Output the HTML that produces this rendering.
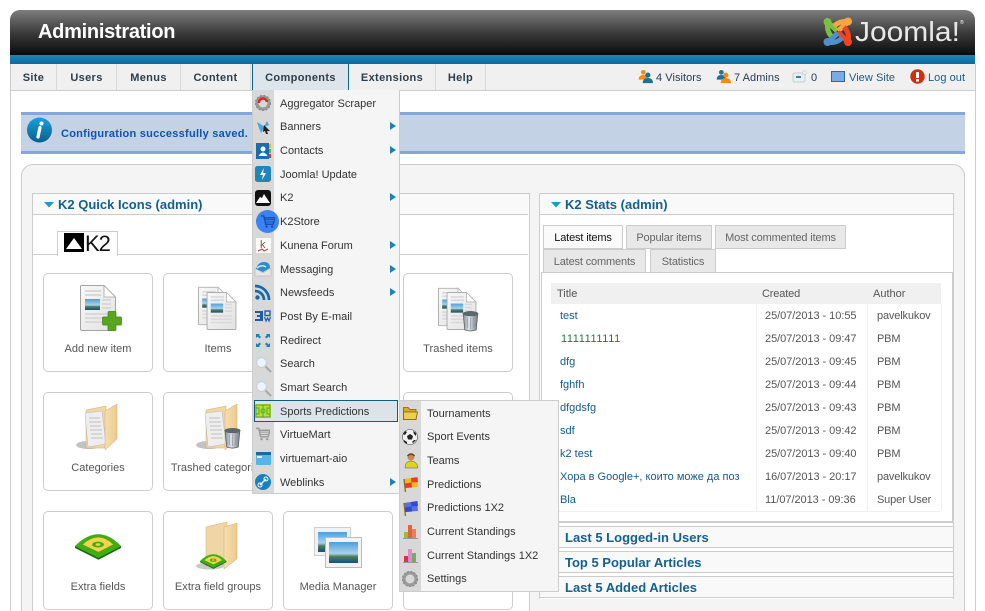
<!DOCTYPE html>
<html><head><meta charset="utf-8"><title>Administration</title>
<style>
html,body{margin:0;padding:0;background:#fff;width:985px;height:611px;overflow:hidden;font-family:"Liberation Sans",Arial,sans-serif;font-size:11px;color:#444}
#wrap{position:relative;width:985px;height:611px;overflow:hidden}
.a,.t,.m,.tab,.box,.row,.lbl{position:absolute}
.t{white-space:nowrap;line-height:14px;margin-top:1px}
svg{position:absolute;overflow:visible}
#head{left:10px;top:10px;width:965px;height:45px;border-radius:10px 10px 0 0;background:linear-gradient(#7d7d7d,#3c3c3c 50%,#0b0b0b)}
#strip{left:10px;top:55px;width:965px;height:9px;background:linear-gradient(#1c85b8,#0a6b9e)}
#nav{left:11px;top:64px;width:964px;height:26px;background:#f0f0f0;border-bottom:1px solid #ccc}
.m{top:64px;height:26px;line-height:28px;text-align:center;font-weight:bold;color:#2e3d4a;border-right:1px solid #d8d8d8;letter-spacing:.35px}
.nt{top:70px;color:#2a3a55;letter-spacing:.05px}
.box{width:108px;height:97px;border:1px solid #ccc;border-radius:5px;background:#fff}
.lbl{width:110px;text-align:center;line-height:14px;color:#555;white-space:nowrap;margin-top:1px;letter-spacing:.03px}
.tab{box-sizing:border-box;height:24px;line-height:24px;text-align:center;background:#e8e8e8;border:1px solid #ccc;color:#666;letter-spacing:-.15px}
.row{left:551px;width:390px;height:23px;border-bottom:1px solid #f0f0f0;background:#fff}
.c{position:absolute;top:0;margin-top:1px;line-height:22px;white-space:nowrap;color:#555}
.d{letter-spacing:-.05px}
.u{letter-spacing:-.15px}
.l{color:#145a88}
.acc{position:absolute;left:539px;width:413px;height:20px;border:1px solid #ccc;background:#f9f9f9}
.acc span{position:absolute;left:25px;top:2px;font:bold 13px/18px "Liberation Sans",sans-serif;color:#14608f;white-space:nowrap}
.mi{position:absolute;left:280px;color:#333;line-height:14px;white-space:nowrap;margin-top:1px}
.si{position:absolute;left:427px;color:#333;line-height:14px;white-space:nowrap;margin-top:1px}
.arr{position:absolute;left:390px;width:0;height:0;border-left:6px solid #1c84b5;border-top:4.5px solid transparent;border-bottom:4.5px solid transparent}
</style></head><body><div id="wrap">
<svg width="0" height="0" style="position:absolute"><defs>
<linearGradient id="pg" x1="0" y1="0" x2="1" y2="1"><stop offset="0" stop-color="#f8f8f8"/><stop offset="1" stop-color="#e2e2e2"/></linearGradient>
<linearGradient id="sky" x1="0" y1="0" x2="0" y2="1"><stop offset="0" stop-color="#4d9fdc"/><stop offset=".55" stop-color="#a9d3ea"/><stop offset=".7" stop-color="#4f7a5a"/><stop offset="1" stop-color="#14507f"/></linearGradient>
<linearGradient id="fold" x1="0" y1="0" x2="1" y2="0"><stop offset="0" stop-color="#f6deb0"/><stop offset="1" stop-color="#ecca8e"/></linearGradient>
<linearGradient id="can" x1="0" y1="0" x2="1" y2="0"><stop offset="0" stop-color="#7f8c96"/><stop offset=".4" stop-color="#dfe5ea"/><stop offset="1" stop-color="#6d7880"/></linearGradient>
<symbol id="page" viewBox="0 0 36 46" overflow="visible"><path d="M1 .5H24L35.500 12V44a1.500 1.500 0 0 1-1.500 1.500H2A1.500 1.500 0 0 1 .5 44V2A1.500 1.500 0 0 1 1 .5Z" fill="url(#pg)" stroke="#a4a4a4"/><path d="M24 .5V12H35.500Z" fill="#fff" stroke="#b4b4b4"/><rect x="5" y="14" width="15" height="11" fill="url(#sky)"/><path d="M5 6h16M5 10h16M22 15h9M22 19h9M22 23h9M5 29h26M5 33h26M5 37h26" stroke="#d9d9d9" stroke-width="2"/></symbol>
<symbol id="trash" viewBox="0 0 16 20" overflow="visible"><path d="M1 3.500 2.500 19Q8 21 13.500 19L15 3.500Z" fill="url(#can)" stroke="#555" stroke-width=".6"/><ellipse cx="8" cy="3.500" rx="7.500" ry="2.500" fill="#5c666d"/><path d="M5 7v10M8 7v11M11 7v10" stroke="#909aa2" stroke-width=".7"/></symbol>
<symbol id="folderbig" viewBox="0 0 42 47" overflow="visible"><ellipse cx="13" cy="41" rx="13" ry="4" fill="#777" opacity=".45"/><path d="M10 6 30 2V44L10 44Z" fill="#f0d6a4" stroke="#d2ae72" stroke-width=".5"/><path d="M9 9 26 7 30 40 12 43Z" fill="#eeeeee" stroke="#b8b8b8" stroke-width=".5"/><path d="M13 14h11M13 18h12M14 22h11M14 26h12M15 30h11M15 34h12" stroke="#cfcfcf" stroke-width="1.500"/><path d="M29 7 41 0V35L29 46Z" fill="url(#fold)" stroke="#d2ae72" stroke-width=".5"/></symbol>
<symbol id="field" viewBox="0 0 48 24" overflow="visible"><path d="M0 12Q24-12 47 12L24 24Z" fill="#3eae12"/><path d="M0 12 24 24 47 12V14L24 26 0 14Z" fill="#176a0b"/><path d="M8 10.500Q24-4 39 10.500L24 18Z" fill="#fbd04f"/><ellipse cx="23.500" cy="10.500" rx="6" ry="3" fill="#3eae12"/><ellipse cx="23.500" cy="10.500" rx="2.500" ry="1.300" fill="#fbd04f"/></symbol>
<symbol id="mag" viewBox="0 0 17 17"><circle cx="6.500" cy="6.500" r="5" fill="#eaf5fb" stroke="#c8d0d5" stroke-width="1.300"/><path d="M10.500 10.500 16 16" stroke="#a8a8a8" stroke-width="2"/></symbol>
<symbol id="gear" viewBox="0 0 16 16"><circle cx="8" cy="8" r="6" fill="none" stroke="#9a9a9a" stroke-width="3"/><circle cx="8" cy="8" r="7.400" fill="none" stroke="#8a8a8a" stroke-width="1.400" stroke-dasharray="2 1.500"/></symbol>
<symbol id="flag" viewBox="0 0 16 17"><path d="M2 3 15 1 16 11 3 12Z" fill="currentColor"/><path d="M2 3 3.500 16" stroke="#8a6a2a" stroke-width="1.300"/></symbol>
<symbol id="usr" viewBox="0 0 15 16"><circle cx="8" cy="4" r="3.500" fill="currentColor"/><path d="M1 15Q1 8 8 8T15 15Z" fill="currentColor"/></symbol>
<symbol id="cart" viewBox="0 0 16 14"><path d="M1 1H4L6 10H14L16 3H5" fill="none" stroke="currentColor" stroke-width="1.500"/><path d="M5 5H15M5.500 7.500H14" stroke="currentColor"/><circle cx="7" cy="12.500" r="1.300" fill="currentColor"/><circle cx="13" cy="12.500" r="1.300" fill="currentColor"/></symbol>
</defs></svg>

<div class="a" id="head"></div>
<div class="t" style="left:38px;top:18px;font:bold 20px/26px 'Liberation Sans',sans-serif;color:#fff;letter-spacing:-.28px">Administration</div>
<svg style="left:823px;top:17px" width="30" height="30" viewBox="0 0 30 30" fill="none" stroke-width="5">
<path d="M5 5Q3 14 9 20" stroke="#7ac143"/><path d="M6 6 14 14" stroke="#7ac143"/>
<path d="M25 5Q18 3 11 9" stroke="#f9a541"/><path d="M25 5 15 14" stroke="#f9a541"/>
<path d="M25 25Q27 16 21 10" stroke="#f44321"/><path d="M25 25 15 15" stroke="#f44321"/>
<path d="M5 25Q13 27 19 21" stroke="#5091cd"/><path d="M5 25 15 16" stroke="#5091cd"/>
<circle cx="4.500" cy="5" r="4" fill="#7ac143"/><circle cx="25" cy="4.500" r="4" fill="#f9a541"/><circle cx="4.500" cy="25" r="4" fill="#5091cd"/><circle cx="25" cy="25" r="4" fill="#f44321"/></svg>
<div class="t" style="left:855px;top:13px;font:28px/36px 'Liberation Sans',sans-serif;color:#e8e8e8;transform:scaleX(1.07);transform-origin:0 0">Joomla!</div>
<div class="t" style="left:960px;top:19px;font:5px/6px 'Liberation Sans',sans-serif;color:#fff">®</div>
<div class="a" id="strip"></div>
<div class="a" id="nav"></div>
<div class="m" style="left:11px;width:45px">Site</div>
<div class="m" style="left:57px;width:59px">Users</div>
<div class="m" style="left:117px;width:63px">Menus</div>
<div class="m" style="left:181px;width:69px">Content</div>
<div class="m" style="left:252px;width:95px;background:#dde5ea;border-left:1px solid #0f6392;border-right:1px solid #0f6392">Components</div>
<div class="m" style="left:349px;width:86px">Extensions</div>
<div class="m" style="left:436px;width:49px">Help</div>

<svg style="left:638px;top:68px" width="15" height="16"><use href="#usr" width="10" height="12" x="0" y="1" color="#f28d14"/><use href="#usr" width="11" height="14" x="4" y="3" color="#1d7096"/></svg>
<svg style="left:716px;top:68px" width="15" height="16"><use href="#usr" width="10" height="12" x="0" y="1" color="#1d7096"/><use href="#usr" width="11" height="14" x="4" y="3" color="#f28d14"/></svg>
<div class="t nt" style="left:656px">4 Visitors</div>
<div class="t nt" style="left:734px">7 Admins</div>
<svg style="left:793px;top:70px" width="14" height="14"><rect x="0" y="3" width="12" height="9" rx="1.500" fill="#e9eef0" stroke="#c8cdd0"/><path d="M3 7h5" stroke="#3a7fa5" stroke-width="2"/><rect x="10" y="1" width="3" height="3" fill="#fff" stroke="#a9c4d2" stroke-width=".6"/></svg>
<div class="t nt" style="left:811px">0</div>
<svg style="left:831px;top:71px" width="15" height="12"><rect x=".5" y=".5" width="13" height="10" fill="#77ace6" stroke="#2a68a5"/></svg>
<div class="t nt" style="left:849px;color:#1c5a87">View Site</div>
<svg style="left:910px;top:69px" width="15" height="15"><circle cx="7.500" cy="7.500" r="7.200" fill="#d0300c"/><rect x="6" y="3" width="3" height="6" rx=".5" fill="#fff"/><rect x="6" y="10" width="3" height="2.500" fill="#fff"/></svg>
<div class="t nt" style="left:928px;color:#1c5a87">Log out</div>

<div class="a" style="left:10px;top:64px;width:1px;height:547px;background:#ccc"></div>
<div class="a" style="left:975px;top:64px;width:1px;height:547px;background:#ccc"></div>

<div class="a" style="left:21px;top:112px;width:944px;height:36px;background:#c3d2e5;border-top:3px solid #86a7dc;border-bottom:3px solid #86a7dc"></div>
<svg style="left:27px;top:117px" width="26" height="26"><defs><linearGradient id="ib" x1="0" y1="0" x2="0" y2="1"><stop offset="0" stop-color="#17a0dc"/><stop offset="1" stop-color="#0b5f8c"/></linearGradient></defs><circle cx="12.500" cy="13" r="12.500" fill="url(#ib)"/><path d="M13 10.500 11 20" stroke="#fff" stroke-width="3.200" stroke-linecap="round"/><circle cx="14.500" cy="6.500" r="2" fill="#fff"/></svg>
<div class="t" style="left:61px;top:126px;font-weight:bold;color:#0b55b5;letter-spacing:.26px">Configuration successfully saved.</div>

<div class="a" style="left:21px;top:164px;width:942px;height:460px;background:#f4f4f4;border:1px solid #ccc;border-radius:12px"></div>

<div class="a" style="left:32px;top:193px;width:496px;height:440px;background:#fff;border:1px solid #ccc"></div>
<div class="a" style="left:33px;top:194px;width:495px;height:20px;background:#f9f9f9;border-bottom:1px solid #ccc"></div>
<svg style="left:44px;top:202px" width="10" height="6"><path d="M0 0H10L5 5.500Z" fill="#1c9ac8"/></svg>
<div class="t" style="left:58px;top:195px;font:bold 13px/18px 'Liberation Sans',sans-serif;color:#14608f">K2 Quick Icons (admin)</div>
<div class="a" style="left:33px;top:254px;width:495px;height:1px;background:#ccc"></div>
<div class="a" style="left:57px;top:231px;width:59px;height:24px;background:#fff;border:1px solid #ccc;border-bottom:0"></div>
<svg style="left:64px;top:233px" width="20" height="19"><rect width="20" height="19" fill="#000"/><path d="M2 16 10 5 18 16Z" fill="#fff"/></svg>
<div class="t" style="left:85px;top:231px;font:22px/24px 'Liberation Sans',sans-serif;color:#111;letter-spacing:-1px">K2</div>

<div class="box" style="left:43px;top:273px"></div><div class="box" style="left:163px;top:273px"></div><div class="box" style="left:283px;top:273px"></div><div class="box" style="left:403px;top:273px"></div>
<div class="box" style="left:43px;top:392px"></div><div class="box" style="left:163px;top:392px"></div><div class="box" style="left:283px;top:392px"></div><div class="box" style="left:403px;top:392px"></div>
<div class="box" style="left:43px;top:511px"></div><div class="box" style="left:163px;top:511px"></div><div class="box" style="left:283px;top:511px"></div><div class="box" style="left:403px;top:511px"></div>

<svg style="left:80px;top:285px" width="36" height="46"><use href="#page" width="36" height="46"/></svg>
<svg style="left:102px;top:311px" width="20" height="20"><path d="M7 .5h6a1 1 0 0 1 1 1V6h4.500a1 1 0 0 1 1 1v6a1 1 0 0 1-1 1H14v4.500a1 1 0 0 1-1 1H7a1 1 0 0 1-1-1V14H1.500a1 1 0 0 1-1-1V7a1 1 0 0 1 1-1H6V1.500a1 1 0 0 1 1-1Z" fill="#58a51f" stroke="#3e8413" stroke-width=".7"/></svg>
<div class="lbl" style="left:43px;top:341px">Add new item</div>

<svg style="left:198px;top:286px" width="30" height="40"><use href="#page" width="30" height="40"/></svg>
<svg style="left:206px;top:292px" width="31" height="38"><use href="#page" width="31" height="38"/></svg>
<div class="lbl" style="left:163px;top:341px">Items</div>

<svg style="left:438px;top:287px" width="30" height="40"><use href="#page" width="30" height="40"/></svg>
<svg style="left:446px;top:292px" width="31" height="38"><use href="#page" width="31" height="38"/></svg>
<svg style="left:462px;top:310px" width="17" height="21"><use href="#trash" width="17" height="21"/></svg>
<div class="lbl" style="left:403px;top:341px">Trashed items</div>

<svg style="left:76px;top:404px" width="42" height="47"><use href="#folderbig" width="42" height="47"/></svg>
<div class="lbl" style="left:43px;top:460px">Categories</div>
<svg style="left:196px;top:404px" width="42" height="47"><use href="#folderbig" width="42" height="47"/></svg>
<svg style="left:224px;top:426px" width="17" height="23"><use href="#trash" width="17" height="23"/></svg>
<div class="lbl" style="left:163px;top:460px">Trashed categories</div>

<svg style="left:75px;top:534px" width="47" height="24"><use href="#field" width="47" height="24"/></svg>
<div class="lbl" style="left:43px;top:579px">Extra fields</div>
<svg style="left:196px;top:522px" width="42" height="48"><path d="M10 5 31 0V42L10 44Z" fill="#f0d6a4" stroke="#d2ae72" stroke-width=".5"/><path d="M28 5 41 1V37L28 47Z" fill="url(#fold)" stroke="#d2ae72" stroke-width=".5"/><ellipse cx="14" cy="44" rx="14" ry="3.500" fill="#777" opacity=".4"/><use href="#field" x="4" y="32" width="27" height="14"/></svg>
<div class="lbl" style="left:163px;top:579px">Extra field groups</div>
<svg style="left:314px;top:527px" width="48" height="41"><rect x=".5" y=".5" width="36" height="28" fill="#f2f2f2" stroke="#cfcfcf"/><rect x="4" y="5" width="29" height="20" fill="url(#sky)"/><rect x="11.500" y="10.500" width="36" height="30" fill="#f2f2f2" stroke="#bdbdbd"/><rect x="15" y="15" width="29" height="21" fill="url(#sky)"/></svg>
<div class="lbl" style="left:283px;top:579px">Media Manager</div>

<div class="a" style="left:539px;top:193px;width:413px;height:405px;background:#fff;border:1px solid #ccc"></div>
<div class="a" style="left:540px;top:194px;width:413px;height:20px;background:#f9f9f9;border-bottom:1px solid #ccc"></div>
<svg style="left:551px;top:202px" width="10" height="6"><path d="M0 0H10L5 5.500Z" fill="#1c9ac8"/></svg>
<div class="t" style="left:565px;top:195px;font:bold 13px/18px 'Liberation Sans',sans-serif;color:#14608f">K2 Stats (admin)</div>

<div class="tab" style="left:543px;top:225px;width:80px;background:#fafafa;color:#111">Latest items</div>
<div class="tab" style="left:626px;top:225px;width:86px">Popular items</div>
<div class="tab" style="left:715px;top:225px;width:131px">Most commented items</div>
<div class="tab" style="left:543px;top:249px;width:103px">Latest comments</div>
<div class="tab" style="left:650px;top:249px;width:66px">Statistics</div>

<div class="a" style="left:541px;top:272px;width:410px;height:248px;background:#fff;border:1px solid #ccc;border-right-width:2px;border-bottom-width:2px"></div>
<div class="a" style="left:551px;top:283px;width:390px;height:21px;background:#f0f0f0"></div>
<div class="c" style="left:557px;top:283px;line-height:21px">Title</div>
<div class="c" style="left:762px;top:283px;line-height:21px;letter-spacing:-.15px">Created</div>
<div class="c" style="left:873px;top:283px;line-height:21px">Author</div>
<div class="row" style="top:304px"><div class="c l" style="left:9px">test</div><div class="c d" style="left:214px">25/07/2013 - 10:55</div><div class="c u" style="left:326px">pavelkukov</div></div>
<div class="row" style="top:327px"><div class="c" style="left:10px;color:#1f7a3a;letter-spacing:.6px">1111111111</div><div class="c d" style="left:214px">25/07/2013 - 09:47</div><div class="c u" style="left:326px">PBM</div></div>
<div class="row" style="top:350px"><div class="c l" style="left:9px">dfg</div><div class="c d" style="left:214px">25/07/2013 - 09:45</div><div class="c u" style="left:326px">PBM</div></div>
<div class="row" style="top:373px"><div class="c l" style="left:9px">fghfh</div><div class="c d" style="left:214px">25/07/2013 - 09:44</div><div class="c u" style="left:326px">PBM</div></div>
<div class="row" style="top:396px"><div class="c l" style="left:9px">dfgdsfg</div><div class="c d" style="left:214px">25/07/2013 - 09:43</div><div class="c u" style="left:326px">PBM</div></div>
<div class="row" style="top:419px"><div class="c l" style="left:9px">sdf</div><div class="c d" style="left:214px">25/07/2013 - 09:42</div><div class="c u" style="left:326px">PBM</div></div>
<div class="row" style="top:442px"><div class="c l" style="left:9px">k2 test</div><div class="c d" style="left:214px">25/07/2013 - 09:40</div><div class="c u" style="left:326px">PBM</div></div>
<div class="row" style="top:465px"><div class="c l" style="left:9px">Хора в Google+, които може да поз</div><div class="c d" style="left:214px">16/07/2013 - 20:17</div><div class="c u" style="left:326px">pavelkukov</div></div>
<div class="row" style="top:488px"><div class="c l" style="left:9px">Bla</div><div class="c d" style="left:214px">11/07/2013 - 09:36</div><div class="c u" style="left:326px">Super User</div></div>
<div class="a" style="left:756px;top:304px;width:1px;height:207px;background:#f0f0f0"></div>
<div class="a" style="left:867px;top:304px;width:1px;height:207px;background:#f0f0f0"></div>
<div class="a" style="left:941px;top:304px;width:1px;height:207px;background:#f0f0f0"></div>

<div class="acc" style="top:526px"><span>Last 5 Logged-in Users</span></div>
<div class="acc" style="top:551px"><span>Top 5 Popular Articles</span></div>
<div class="acc" style="top:576px"><span>Last 5 Added Articles</span></div>
<div class="a" style="left:530px;top:599px;width:434px;height:12px;background:#f4f4f4"></div>
<div class="a" style="left:530px;top:193px;width:9px;height:418px;background:#f4f4f4"></div>

<!-- dropdown -->
<div class="a" style="left:252px;top:90px;width:146px;height:403px;background:#f5f5f5;border:1px solid #ccc;border-top:0"></div>
<div class="a" style="left:253px;top:90px;width:21px;height:403px;background:#d8d8d8"></div>
<div class="a" style="left:254px;top:400px;width:142px;height:20px;background:#dce4ea;border:1px solid #125a84"></div>

<div class="mi" style="top:96px">Aggregator Scraper</div>
<div class="mi" style="top:119px">Banners</div><div class="arr" style="top:122px"></div>
<div class="mi" style="top:143px">Contacts</div><div class="arr" style="top:146px"></div>
<div class="mi" style="top:167px">Joomla! Update</div>
<div class="mi" style="top:190px">K2</div><div class="arr" style="top:193px"></div>
<div class="mi" style="top:214px">K2Store</div>
<div class="mi" style="top:238px">Kunena Forum</div><div class="arr" style="top:241px"></div>
<div class="mi" style="top:262px">Messaging</div><div class="arr" style="top:265px"></div>
<div class="mi" style="top:285px">Newsfeeds</div><div class="arr" style="top:288px"></div>
<div class="mi" style="top:309px">Post By E-mail</div>
<div class="mi" style="top:333px">Redirect</div>
<div class="mi" style="top:356px">Search</div>
<div class="mi" style="top:380px">Smart Search</div>
<div class="mi" style="top:404px">Sports Predictions</div>
<div class="mi" style="top:427px">VirtueMart</div>
<div class="mi" style="top:451px">virtuemart-aio</div>
<div class="mi" style="top:475px">Weblinks</div><div class="arr" style="top:478px"></div>

<svg style="left:255px;top:95px" width="16" height="16"><use href="#gear" width="16" height="16"/><path d="M4 8A4 4 0 0 1 12 7" fill="none" stroke="#d62b1f" stroke-width="2.500"/></svg>
<svg style="left:256px;top:119px" width="16" height="16"><path d="M1 3 9 8 5 14 3 9Z" fill="#48a8dc"/><path d="M11 2 8 8 13 6Z" fill="#48a8dc"/><path d="M8 6 14 12 11 12 12 15 10 15 9 12 7 13Z" fill="#222"/></svg>
<svg style="left:256px;top:143px" width="15" height="16"><rect width="13" height="16" fill="#1a6bb0"/><rect x="13" y="1" width="2" height="4" fill="#e4b81f"/><rect x="13" y="6" width="2" height="4" fill="#6cb02b"/><rect x="13" y="11" width="2" height="4" fill="#d33"/><circle cx="7" cy="6" r="2.500" fill="#fff"/><path d="M2.500 13Q7 6 11.500 13Z" fill="#fff"/></svg>
<svg style="left:255px;top:166px" width="16" height="16"><rect width="16" height="16" rx="2.500" fill="#1f87b8"/><path d="M9 2 5 9H8L7 14 11 7H8Z" fill="#fff"/></svg>
<svg style="left:255px;top:190px" width="16" height="16"><rect width="16" height="16" rx="3" fill="#111"/><path d="M1 13 5 7 7 8 9 4 15 13Z" fill="#fff"/></svg>
<svg style="left:256px;top:210px" width="23" height="23"><circle cx="11.500" cy="11.500" r="11.500" fill="#3b82f6"/><use href="#cart" x="4" y="5" width="15" height="13" color="#1750a8"/></svg>
<svg style="left:256px;top:238px" width="15" height="15"><rect width="15" height="15" fill="#fbfbfb"/><text x="4" y="10" font-family="Liberation Sans,sans-serif" font-size="11" fill="#7a5a2a">k</text><path d="M2 13 6 11 8 13 12 11" fill="none" stroke="#d33" stroke-width="1"/></svg>
<svg style="left:255px;top:261px" width="16" height="16"><path d="M0 7 8 12 16 7V15H0Z" fill="#e6e6e6" stroke="#b0b0b0" stroke-width=".5"/><path d="M1 8Q3 1 9 1T15 7L8 11Z" fill="#2a8dc8"/><path d="M2 7Q7 3 11 6" fill="none" stroke="#cfe9f7" stroke-width="1.500"/></svg>
<svg style="left:255px;top:285px" width="15" height="15"><circle cx="2.500" cy="12.500" r="2.200" fill="#1668a8"/><path d="M0 6A9 9 0 0 1 9 15M0 1A14 14 0 0 1 14 15" fill="none" stroke="#1668a8" stroke-width="2.700"/></svg>
<svg style="left:255px;top:310px" width="16" height="12"><path d="M0 1H8V11H0V9H5V7H2V5H5V3H0Z" fill="#1f5da8"/><rect x="10" y="1" width="5" height="4.500" fill="none" stroke="#1f5da8" stroke-width="1.400"/><path d="M9.500 7 11 11 12.500 8 14 11 15.500 7" fill="none" stroke="#1f5da8" stroke-width="1.200"/></svg>
<svg style="left:255px;top:333px" width="16" height="15" fill="#1f7eb8"><path d="M1 1H5L4 2 6 4 4.500 5.500 2.500 3.500 1 5ZM15 1V5L13.500 3.500 11.500 5.500 10 4 12 2 11 1ZM1 14V10L2.500 11.500 4.500 9.500 6 11 4 13 5 14ZM15 14H11L12 13 10 11 11.500 9.500 13.500 11.500 15 10Z"/></svg>
<svg style="left:255px;top:356px" width="17" height="17"><use href="#mag" width="17" height="17"/></svg>
<svg style="left:255px;top:380px" width="17" height="17"><use href="#mag" width="17" height="17"/></svg>
<svg style="left:255px;top:404px" width="16" height="14"><rect width="16" height="14" fill="#b5e03a"/><rect x="1" y="1" width="14" height="12" fill="none" stroke="#5aa82a"/><path d="M8 1V13" stroke="#5aa82a"/><circle cx="8" cy="7" r="2" fill="none" stroke="#5aa82a"/><path d="M1 4H4V10H1M15 4H12V10H15" fill="none" stroke="#5aa82a"/></svg>
<svg style="left:255px;top:427px" width="16" height="15"><use href="#cart" width="15" height="14" color="#9a9a9a"/></svg>
<svg style="left:256px;top:452px" width="15" height="13"><rect width="15" height="13" rx="1" fill="#55b5e8"/><rect width="15" height="3" fill="#1f6a9a"/><rect x="1" y="4" width="5" height="2" fill="#e0f3fc"/></svg>
<svg style="left:255px;top:474px" width="16" height="16"><circle cx="8" cy="8" r="8" fill="#1a80bc"/><path d="M5 11 11 5" stroke="#e4f3fb" stroke-width="1.500"/><circle cx="5" cy="11" r="2" fill="none" stroke="#fff"/><circle cx="11" cy="5" r="2" fill="none" stroke="#fff"/></svg>

<!-- submenu -->
<div class="a" style="left:399px;top:400px;width:158px;height:190px;background:#f5f5f5;border:1px solid #ccc"></div>
<div class="a" style="left:400px;top:401px;width:21px;height:190px;background:#d8d8d8"></div>
<div class="si" style="top:406px">Tournaments</div>
<div class="si" style="top:429px">Sport Events</div>
<div class="si" style="top:453px">Teams</div>
<div class="si" style="top:477px">Predictions</div>
<div class="si" style="top:500px">Predictions 1X2</div>
<div class="si" style="top:524px">Current Standings</div>
<div class="si" style="top:548px">Current Standings 1X2</div>
<div class="si" style="top:571px">Settings</div>
<svg style="left:403px;top:406px" width="15" height="14"><path d="M.5 1.500H5L7 3.500H13V13.500H.5Z" fill="#d8aa22" stroke="#7a6112" stroke-width=".8"/><path d="M.5 6H14.500L13 13.500H.5Z" fill="#f0cc50" stroke="#7a6112" stroke-width=".8"/></svg>
<svg style="left:402px;top:429px" width="16" height="16"><circle cx="8" cy="8" r="7.500" fill="#f1f1f1" stroke="#444" stroke-width=".6"/><path d="M8 5 11 7 10 10.500H6L5 7Z" fill="#222"/><path d="M1 5 3 2 5 3 3 6ZM11 2 14 4 14 7 12 5ZM2 11 5 13 5 15 2 13ZM11 14 14 11 12 11 10 13Z" fill="#222"/></svg>
<svg style="left:404px;top:453px" width="14" height="16"><circle cx="7" cy="4" r="3.500" fill="#c68a52"/><path d="M3.500 3Q7-1 10.500 3" fill="none" stroke="#6a3f1a" stroke-width="1.500"/><path d="M1 15Q1 8 7 8T14 15Z" fill="#e5cf26" stroke="#5a6a1a" stroke-width=".5"/></svg>
<svg style="left:402px;top:476px" width="16" height="17"><use href="#flag" width="16" height="17" color="#f5b81c"/><path d="M9 2 15.500 1.200 16 6 9.500 6.500ZM3 7.500 9.500 6.500 10 11.500 3.500 12Z" fill="#ea3c25"/></svg>
<svg style="left:402px;top:500px" width="16" height="17"><use href="#flag" width="16" height="17" color="#5a6de8"/><path d="M9 2 15.500 1.200 16 6 9.500 6.500ZM3 7.500 9.500 6.500 10 11.500 3.500 12Z" fill="#2e4bd0"/></svg>
<svg style="left:403px;top:524px" width="15" height="15"><rect x="1" y="8" width="4" height="6" fill="#a5b92a"/><rect x="5" y="1" width="4" height="13" fill="#e0643a"/><rect x="9" y="5" width="4" height="9" fill="#ef7d58"/><path d="M0 14.500H15" stroke="#999"/></svg>
<svg style="left:403px;top:548px" width="15" height="15"><rect x="1" y="8" width="4" height="6" fill="#d8324a"/><rect x="5" y="1" width="4" height="13" fill="#e887c6"/><rect x="9" y="5" width="4" height="9" fill="#62b46a"/><path d="M0 14.500H15" stroke="#999"/></svg>
<svg style="left:402px;top:571px" width="16" height="16"><use href="#gear" width="16" height="16"/></svg>
</div></body></html>
